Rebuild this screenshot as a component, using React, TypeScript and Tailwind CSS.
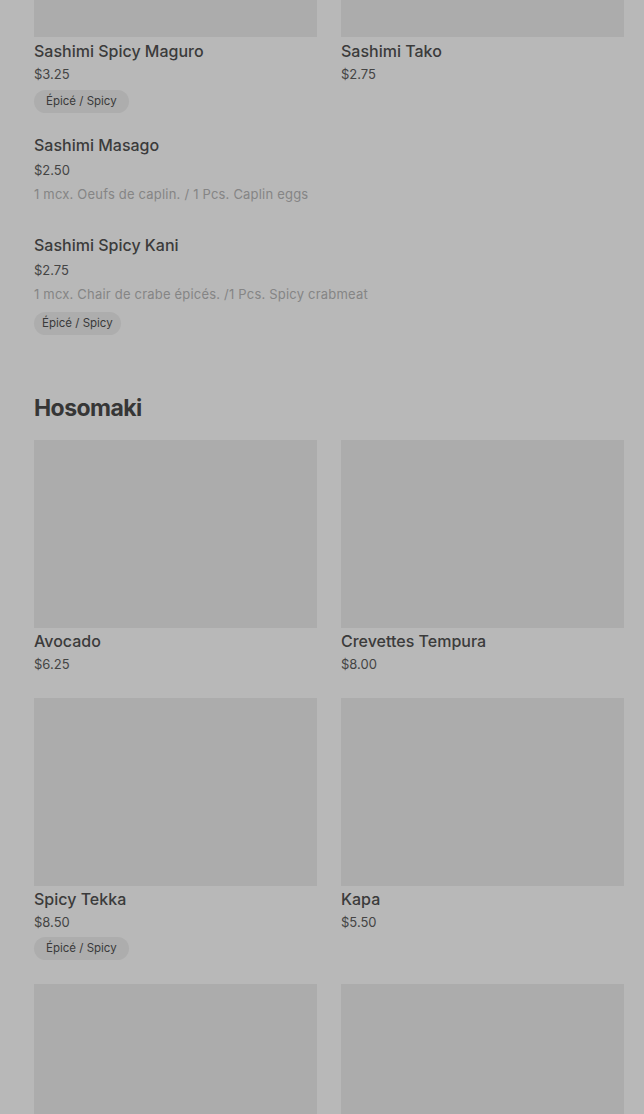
type Item = {
  name: string;
  price: string;
  desc?: string;
  spicy?: boolean;
};

const sashimiGrid: Item[] = [
  { name: 'Sashimi Spicy Maguro', price: '$3.25', spicy: true },
  { name: 'Sashimi Tako', price: '$2.75' },
];

const sashimiList: Item[] = [
  { name: 'Sashimi Masago', price: '$2.50', desc: '1 mcx. Oeufs de caplin. / 1 Pcs. Caplin eggs' },
  { name: 'Sashimi Spicy Kani', price: '$2.75', desc: '1 mcx. Chair de crabe épicés. /1 Pcs. Spicy crabmeat', spicy: true },
];

const hosomaki: Item[] = [
  { name: 'Avocado', price: '$6.25' },
  { name: 'Crevettes Tempura', price: '$8.00' },
  { name: 'Spicy Tekka', price: '$8.50', spicy: true },
  { name: 'Kapa', price: '$5.50' },
  { name: '', price: '' },
  { name: '', price: '' },
];

function Badge({ wide }: { wide?: boolean }) {
  return (
    <span
      className={
        'inline-flex h-[23px] items-center rounded-full bg-[#adadad] text-[11.5px] text-[#3a3a3a] ' +
        (wide ? 'px-3' : 'px-2')
      }
    >
      Épicé / Spicy
    </span>
  );
}

function Card({ item }: { item: Item }) {
  return (
    <div className="flex flex-col">
      <div className="h-[188px] w-full bg-[#acacac]" />
      {item.name && (
        <>
          <p className="mt-px text-[16px] leading-6 font-medium text-[#3b3b3b]">{item.name}</p>
          <p className="mt-px text-[13px] leading-5 text-[#444]">{item.price}</p>
          {item.spicy && (
            <div className="mt-[2px]">
              <Badge wide />
            </div>
          )}
        </>
      )}
    </div>
  );
}

export default function App() {
  return (
    <div
      className="min-h-[1114px] overflow-hidden bg-[#b8b8b8] pl-[34px] pr-[20px]"
      style={{ fontFamily: 'Inter, "Noto Sans", sans-serif' }}
    >
      {/* Sashimi, scrolled part */}
      <div className="-mt-[151px] grid grid-cols-2 gap-x-6">
        {sashimiGrid.map((it) => (
          <div key={it.name} className="flex flex-col">
            <div className="h-[188px] w-full bg-[#acacac]" />
            <p className="mt-[2px] text-[16px] leading-6 font-medium text-[#3b3b3b]">{it.name}</p>
            <p className="mt-px text-[13px] leading-5 text-[#444]">{it.price}</p>
            {it.spicy && (
              <div className="mt-[3px]">
                <Badge wide />
              </div>
            )}
          </div>
        ))}
      </div>

      <div className="mt-[20px] flex flex-col gap-[29px]">
        {sashimiList.map((it) => (
          <div key={it.name} className="flex flex-col">
            <p className="text-[16px] leading-6 font-medium text-[#3b3b3b]">{it.name}</p>
            <p className="mt-[3px] text-[13px] leading-5 text-[#444]">{it.price}</p>
            <p className="mt-[4px] text-[13px] leading-5 tracking-[0.2px] text-[#858585]">{it.desc}</p>
            {it.spicy && (
              <div className="mt-[5px]">
                <Badge />
              </div>
            )}
          </div>
        ))}
      </div>

      <h2 className="mt-[57px] text-[23px] leading-8 font-bold tracking-tight text-[#363636]">Hosomaki</h2>

      <div className="mt-[16px] grid grid-cols-2 gap-x-6 gap-y-6">
        {hosomaki.map((it, i) => (
          <Card key={i} item={it} />
        ))}
      </div>
    </div>
  );
}
